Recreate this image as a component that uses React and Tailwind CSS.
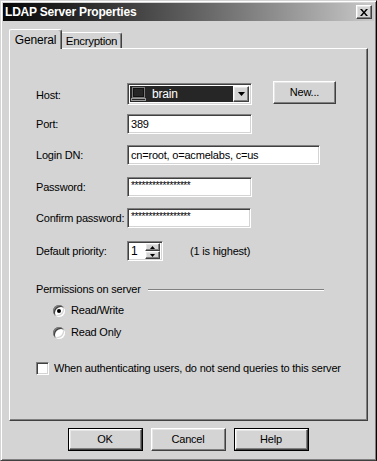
import { useState } from 'react'

// ── Win2000-style 3D edges (greyscale) ────────────────────────────────────────

const raised =
  'border border-t-white border-l-white border-b-[#404040] border-r-[#404040] shadow-[inset_-1px_-1px_0_#808080,inset_1px_1px_0_#e6e6e6]'

const sunken =
  'border border-t-[#808080] border-l-[#808080] border-b-white border-r-white shadow-[inset_1px_1px_0_#404040,inset_-1px_-1px_0_#d4d4d4]'

function Button({ children, isDefault, className = '' }) {
  const btn = (
    <div className={`flex h-full w-full items-center justify-center bg-[#d4d4d4] ${raised}`}>
      {children}
    </div>
  )
  if (isDefault) {
    return <div className={`border border-black ${className}`}>{btn}</div>
  }
  return <div className={className}>{btn}</div>
}

function TextBox({ value, width, small }) {
  return (
    <div
      className={`flex h-[20px] items-center bg-white pl-[3px] ${sunken} ${small ? 'text-[10px] tracking-[-0.4px]' : ''}`}
      style={{ width }}
    >
      <span className={small ? '-mt-[4px]' : ''}>{value}</span>
    </div>
  )
}

function Label({ children }) {
  return <div className="w-[91px] shrink-0 whitespace-nowrap pt-px">{children}</div>
}

function Monitor() {
  return (
    <svg width="16" height="14" viewBox="0 0 16 14" className="shrink-0">
      <rect x="1.5" y="0.5" width="12" height="10" fill="#262626" stroke="#7a7a7a" />
      <rect x="2.5" y="1.5" width="10" height="8" fill="none" stroke="#111" />
      <rect x="0.5" y="11.5" width="14" height="2" fill="#262626" stroke="#9a9a9a" />
    </svg>
  )
}

function Arrow({ up, size = 7 }) {
  const h = Math.ceil(size / 2)
  return (
    <svg width={size} height={h} viewBox={`0 0 ${size} ${h}`}>
      {up ? (
        <polygon points={`${size / 2},0 ${size},${h} 0,${h}`} fill="#000" />
      ) : (
        <polygon points={`0,0 ${size},0 ${size / 2},${h}`} fill="#000" />
      )}
    </svg>
  )
}

function Radio({ checked, label, onClick }) {
  return (
    <div className="flex h-[13px] items-center" onClick={onClick}>
      <div className="relative h-[12px] w-[12px] rounded-full bg-white shadow-[inset_1px_1px_0_#808080,inset_-1px_-1px_0_#ffffff,inset_2px_2px_0_#404040,inset_-2px_-2px_0_#d4d4d4]">
        {checked && <div className="absolute left-[4px] top-[4px] h-[4px] w-[4px] rounded-full bg-black" />}
      </div>
      <span className="ml-[6px]">{label}</span>
    </div>
  )
}

export default function App() {
  const [mode, setMode] = useState('rw')

  return (
    <div
      className="flex h-[461px] w-[377px] flex-col border border-t-[#d4d4d4] border-l-[#d4d4d4] border-b-[#404040] border-r-black bg-[#d4d4d4] p-[2px] text-[11px] leading-[13px] tracking-[-0.2px] text-black shadow-[inset_1px_1px_0_#ffffff,inset_-1px_-1px_0_#808080]"
      style={{ fontFamily: '"Liberation Sans", Arial, sans-serif' }}
    >
      {/* Title bar */}
      <div className="flex h-[18px] shrink-0 items-center justify-between bg-gradient-to-r from-[#080808] via-[#5e5e5e] to-[#c9c9c9] pl-[2px] pr-[2px]">
        <span className="text-[12px] font-bold tracking-[-0.2px] text-white">LDAP Server Properties</span>
        <div className={`flex h-[14px] w-[16px] items-center justify-center bg-[#d4d4d4] ${raised}`}>
          <svg width="8" height="7" viewBox="0 0 8 7">
            <path d="M0 0 L2 0 L4 2.5 L6 0 L8 0 L5 3.5 L8 7 L6 7 L4 4.5 L2 7 L0 7 L3 3.5 Z" fill="#000" />
          </svg>
        </div>
      </div>

      {/* Tabs */}
      <div className="mx-[6px] mt-[8px] flex items-end">
        <div className="relative z-10 -mb-px flex h-[20px] w-[53px] items-start justify-center rounded-tl-[2px] rounded-tr-[3px] border-l border-t border-l-white border-t-white border-r border-r-[#404040] bg-[#d4d4d4] pt-[4px] text-[12px] shadow-[inset_-1px_0_0_#808080]">
          General
        </div>
        <div className="flex h-[16px] w-[60px] items-start justify-center rounded-tr-[3px] border-t border-t-white border-r border-r-[#404040] bg-[#d4d4d4] pt-[2px] text-[11.5px] tracking-[-0.3px] shadow-[inset_-1px_0_0_#808080]">
          Encryption
        </div>
      </div>

      {/* Panel */}
      <div className="mx-[6px] flex h-[373px] shrink-0 flex-col border border-t-white border-l-white border-b-[#404040] border-r-[#404040] pl-[26px] shadow-[inset_-1px_-1px_0_#808080]">
        {/* Host */}
        <div className="mt-[32px] flex items-start">
          <Label>
            <div className="mt-[7px]">Host:</div>
          </Label>
          <div className={`mt-[2px] flex h-[22px] w-[125px] items-center bg-white p-[2px] ${sunken}`}>
            <div className="flex h-full flex-1 items-center gap-[5px] bg-[#262626] pl-[1px] text-[12px] text-white">
              <Monitor />
              <span>brain</span>
            </div>
            <div className={`flex h-full w-[16px] items-center justify-center bg-[#d4d4d4] ${raised}`}>
              <Arrow size={7} />
            </div>
          </div>
          <Button className="ml-[21px] h-[23px] w-[63px]">New...</Button>
        </div>

        {/* Port */}
        <div className="mt-[9px] flex items-center">
          <Label>Port:</Label>
          <TextBox value="389" width={125} />
        </div>

        {/* Login DN */}
        <div className="mt-[11px] flex items-center">
          <Label>Login DN:</Label>
          <TextBox value="cn=root, o=acmelabs, c=us" width={193} />
        </div>

        {/* Password */}
        <div className="mt-[12px] flex items-center">
          <Label>Password:</Label>
          <TextBox value="*****************" width={125} small />
        </div>

        {/* Confirm */}
        <div className="mt-[11px] flex items-center">
          <Label>Confirm password:</Label>
          <TextBox value="*****************" width={124} small />
        </div>

        {/* Priority */}
        <div className="mt-[13px] flex items-center">
          <Label>Default priority:</Label>
          <div className={`flex h-[20px] w-[36px] items-center bg-white pl-[3px] ${sunken}`}>
            <span className="flex-1 text-[12px]">1</span>
            <div className="mr-[2px] flex h-[16px] w-[15px] flex-col">
              <div className={`flex flex-1 items-center justify-center bg-[#d4d4d4] ${raised}`}>
                <Arrow up size={5} />
              </div>
              <div className={`flex flex-1 items-center justify-center bg-[#d4d4d4] ${raised}`}>
                <Arrow size={5} />
              </div>
            </div>
          </div>
          <span className="ml-[27px]">(1 is highest)</span>
        </div>

        {/* Permissions */}
        <div className="mt-[22px] flex h-[13px] items-center">
          <span className="w-[112px] shrink-0 whitespace-nowrap">Permissions on server</span>
          <div className="h-[2px] w-[176px] border-t border-b border-t-[#808080] border-b-white" />
        </div>

        <div className="ml-[17px] mt-[8px]">
          <Radio checked={mode === 'rw'} label="Read/Write" onClick={() => setMode('rw')} />
        </div>
        <div className="ml-[17px] mt-[9px]">
          <Radio checked={mode === 'ro'} label="Read Only" onClick={() => setMode('ro')} />
        </div>

        {/* Checkbox */}
        <div className="mt-[23px] flex h-[13px] items-center">
          <div className={`h-[13px] w-[13px] shrink-0 bg-white ${sunken}`} />
          <span className="ml-[5px] whitespace-nowrap">When authenticating users, do not send queries to this server</span>
        </div>
      </div>

      {/* Buttons */}
      <div className="mt-[7px] flex justify-center gap-[8px] pr-[1px]">
        <Button isDefault className="h-[23px] w-[75px]">OK</Button>
        <Button className="h-[23px] w-[75px]">Cancel</Button>
        <Button isDefault className="h-[23px] w-[75px]">Help</Button>
      </div>
    </div>
  )
}
